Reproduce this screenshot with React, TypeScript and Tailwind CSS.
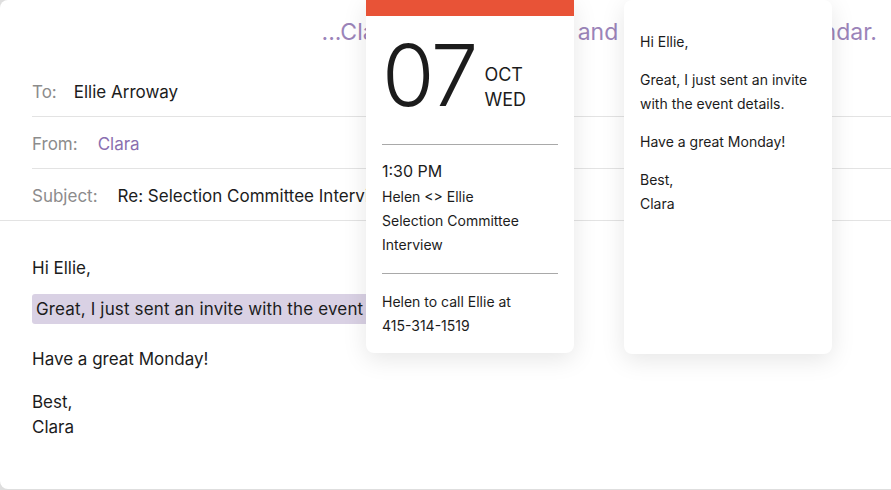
import React from 'react';

const font = { fontFamily: 'Inter, "Noto Sans", sans-serif' };

const Row: React.FC<{ label: string; gap: string; children: React.ReactNode; full?: boolean }> = ({ label, gap, children, full }) => (
    <div className={full ? 'border-b border-[#e3e3e3]' : 'ml-8 border-b border-[#e3e3e3]'}>
        <div className={full ? 'pl-8 pt-1 h-[51px] flex items-center text-[17px]' : 'pt-1 h-[51px] flex items-center text-[17px]'}>
            <span className={`text-[#8c8c8c] ${gap}`}>{label}</span>
            {children}
        </div>
    </div>
);

export default function App() {
    return (
        <div className="w-full h-[490px] bg-[#dedede] overflow-hidden" style={font}>
            <div className="relative w-[900px] h-[489px] bg-white rounded-l-lg">
                {/* header caption, partly hidden behind the cards */}
                <div className="h-[65px] w-[891px] pr-[14px] pt-[18px] text-right text-[23px] text-[#9b84b9] leading-[28px] whitespace-nowrap">
                    ...Cla<span className="tracking-[0.55px]">ra sent this invite </span>and
                    <span className="tracking-[-0.35px]"> added it to his cale</span>ndar.
                </div>

                <Row label="To:" gap="mr-[17px]">
                    <span className="text-[#1c1c1c]">Ellie Arroway</span>
                </Row>
                <Row label="From:" gap="mr-[20px]">
                    <span className="text-[#8a6fb0]">Clara</span>
                </Row>
                <Row label="Subject:" gap="mr-[20px]" full>
                    <span className="text-[#1c1c1c]">Re: Selection Committee Interview</span>
                </Row>

                {/* body */}
                <div className="px-8 pt-[35px] text-[17px] text-[#1c1c1c] leading-[25px]">
                    <p>Hi Ellie,</p>
                    <p className="mt-[13px] h-[30px] w-[420px] flex items-center px-1 bg-[#d9d1e4] rounded-[3px] tracking-[0.15px]">
                        Great, I just sent an invite with the event details.
                    </p>
                    <p className="mt-[23px]">Have a great Monday!</p>
                    <p className="mt-[18px]">Best,</p>
                    <p>Clara</p>
                </div>

                {/* calendar event card */}
                <div className="absolute left-[366px] top-0 w-[208px] bg-white rounded-b-lg shadow-[0_6px_24px_rgba(0,0,0,0.10)] overflow-hidden">
                    <div className="h-4 bg-[#e85337]" />
                    <div className="px-4 pt-[17px] pb-[15px] text-[#1c1c1c]">
                        <div className="flex">
                            <div className="text-[85px] leading-none h-[86px] font-light tracking-[-2px]">07</div>
                            <div className="ml-[8px] mt-[29px] text-[18px] leading-[25px]">
                                <div>OCT</div>
                                <div>WED</div>
                            </div>
                        </div>
                        <div className="mt-[25px] border-t border-[#a9a9a9]" />
                        <div className="pt-[14px] text-[16px] leading-[24px]">1:30 PM</div>
                        <div className="mt-[2px] text-[14px] leading-[24px]">
                            <div>Helen &lt;&gt; Ellie</div>
                            <div>Selection Committee</div>
                            <div>Interview</div>
                        </div>
                        <div className="mt-[16px] border-t border-[#a9a9a9]" />
                        <div className="pt-[16px] text-[14px] leading-[24px]">
                            <div>Helen to call Ellie at</div>
                            <div>415-314-1519</div>
                        </div>
                    </div>
                </div>

                {/* reply preview card */}
                <div className="absolute left-[624px] top-0 w-[208px] h-[354px] bg-white rounded-lg shadow-[0_6px_24px_rgba(0,0,0,0.10)] px-4 pt-[30px] text-[14px] leading-[24px] text-[#1c1c1c]">
                    <p className="mb-[14px]">Hi Ellie,</p>
                    <p className="mb-[14px]">Great, I just sent an invite with the event details.</p>
                    <p className="mb-[14px]">Have a great Monday!</p>
                    <p>Best,</p>
                    <p>Clara</p>
                </div>
            </div>
        </div>
    );
}
